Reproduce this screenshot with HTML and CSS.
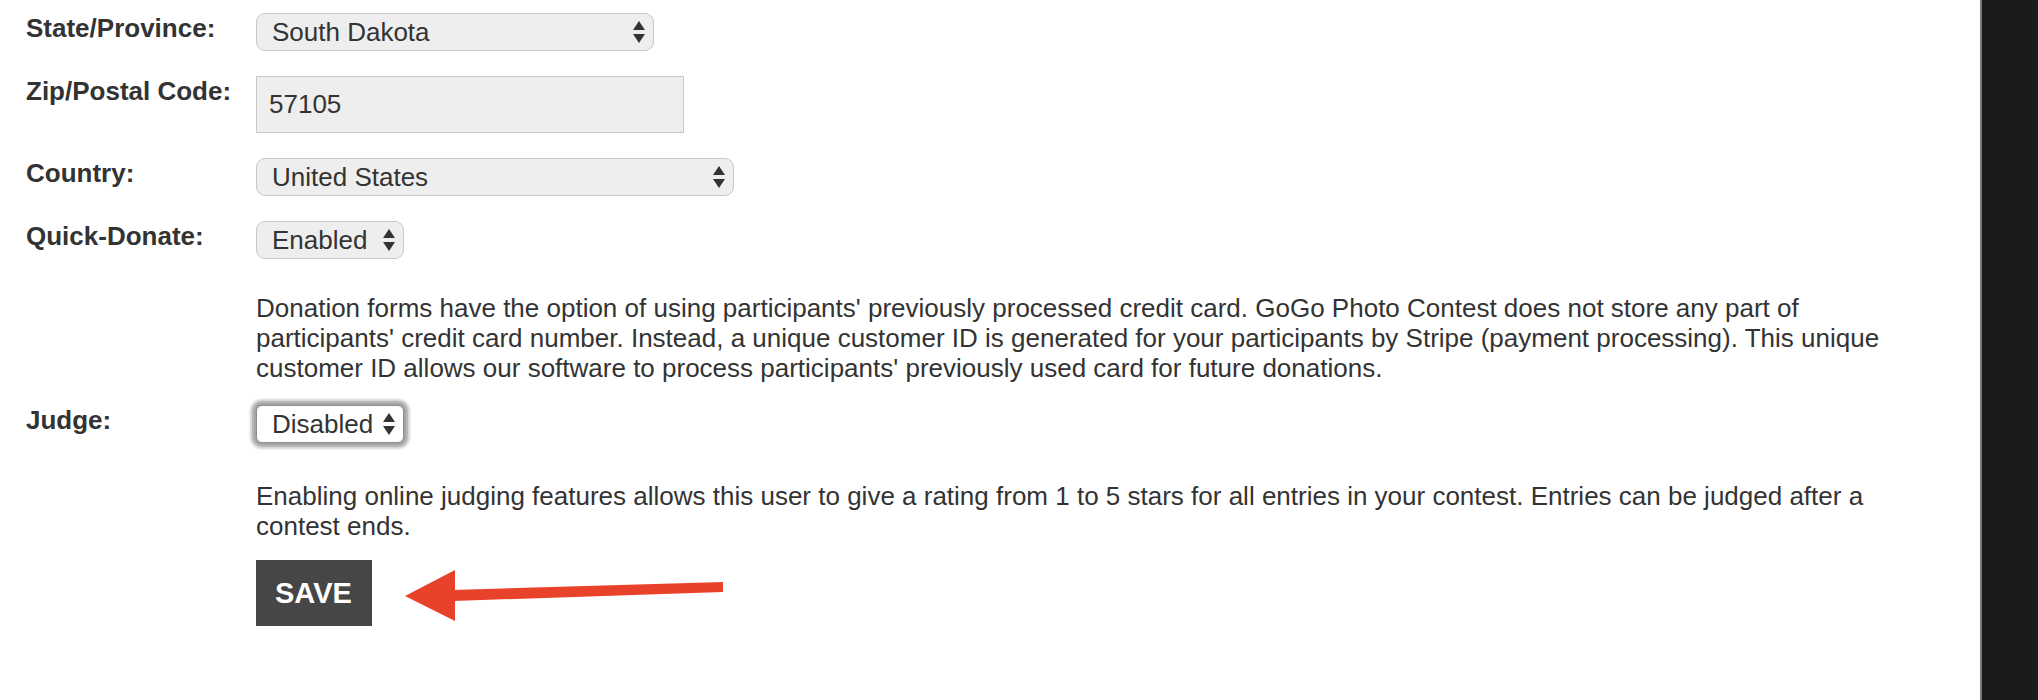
FILE: index.html
```html
<!DOCTYPE html>
<html lang="en">

<head>
  <meta charset="UTF-8">
  <meta name="viewport" content="width=device-width, initial-scale=1.0">
  <title>Account Settings</title>
  <link rel="stylesheet" href="styles.css">
</head>

<body>
  <div class="page">
    <main class="content">
      <form class="settings">
        <div class="row">
          <label class="field-label" for="state">State/Province:</label>
          <span class="select-wrap">
            <select id="state" class="select select-state">
              <option>South Dakota</option>
            </select>
            <svg class="caret" width="12" height="22" viewBox="0 0 12 22">
              <polygon points="0,9 6,0 12,9" />
              <polygon points="0,13 12,13 6,22" />
            </svg>
          </span>
        </div>

        <div class="row">
          <label class="field-label" for="zip">Zip/Postal Code:</label>
          <input type="text" id="zip" class="text-input" value="57105">
        </div>

        <div class="row">
          <label class="field-label" for="country">Country:</label>
          <span class="select-wrap">
            <select id="country" class="select select-country">
              <option>United States</option>
            </select>
            <svg class="caret" width="12" height="22" viewBox="0 0 12 22">
              <polygon points="0,9 6,0 12,9" />
              <polygon points="0,13 12,13 6,22" />
            </svg>
          </span>
        </div>

        <div class="row">
          <label class="field-label" for="quick">Quick-Donate:</label>
          <span class="select-wrap">
            <select id="quick" class="select select-small">
              <option>Enabled</option>
              <option>Disabled</option>
            </select>
            <svg class="caret" width="12" height="22" viewBox="0 0 12 22">
              <polygon points="0,9 6,0 12,9" />
              <polygon points="0,13 12,13 6,22" />
            </svg>
          </span>
        </div>

        <p class="help help-donate">Donation forms have the option of using participants' previously processed credit card. GoGo Photo Contest does not store any part of participants' credit card number. Instead, a unique customer ID is generated for your participants by Stripe (payment processing). This unique customer ID allows our software to process participants' previously used card for future donations.</p>

        <div class="row">
          <label class="field-label" for="judge">Judge:</label>
          <span class="select-wrap">
            <select id="judge" class="select select-small is-focused">
              <option>Disabled</option>
              <option>Enabled</option>
            </select>
            <svg class="caret" width="12" height="22" viewBox="0 0 12 22">
              <polygon points="0,9 6,0 12,9" />
              <polygon points="0,13 12,13 6,22" />
            </svg>
          </span>
        </div>

        <p class="help help-judge">Enabling online judging features allows this user to give a rating from 1 to 5 stars for all entries in your contest. Entries can be judged after a contest ends.</p>

        <div class="actions">
          <button type="submit" class="save">SAVE</button>
          <svg class="pointer" width="322" height="60" viewBox="0 0 322 60">
            <polygon points="50,25 320,17 320,27 50,36" />
            <polygon points="2,31 52,5 52,56" />
          </svg>
        </div>
      </form>
    </main>
    <aside class="sidebar"></aside>
  </div>
</body>

</html>
```

FILE: styles.css
```css
html,
body {
  margin: 0;
  height: 100%;
  background: #fff;
}

body {
  font-family: "Liberation Sans", Arial, Helvetica, sans-serif;
  color: #333;
  overflow: hidden;
}

.page {
  display: flex;
  height: 100%;
}

.content {
  flex: 1;
}

.sidebar {
  width: 56px;
  border-left: 2px solid #7a7a7a;
  background: #1b1b1b;
}

.settings {
  padding: 13px 0 0 26px;
}

.row {
  display: grid;
  grid-template-columns: 230px auto;
  justify-items: start;
  align-items: start;
  margin-bottom: 25px;
}

.field-label {
  padding-top: 1px;
  font-size: 26px;
  line-height: 28px;
  font-weight: bold;
  color: #333;
}

.select-wrap {
  position: relative;
  display: inline-block;
}

.select {
  -webkit-appearance: none;
  appearance: none;
  height: 38px;
  margin: 0;
  padding: 0 30px 0 15px;
  border: 1px solid #c8c8c8;
  border-radius: 9px;
  background: #eee;
  font-family: "Liberation Sans", Arial, Helvetica, sans-serif;
  font-size: 26px;
  color: #333;
  outline: none;
}

.select-state {
  width: 398px;
}

.select-country {
  width: 478px;
}

.select-small {
  width: 148px;
}

.select.is-focused {
  background: #fff;
  border: 1px solid #8c8c8c;
  border-radius: 6px;
  box-shadow: 0 0 0 2px #a4a4a4, 0 0 0 4px #b8b8b8, 0 0 2px 6px #d4d4d4;
}

.caret {
  position: absolute;
  right: 9px;
  top: 8px;
  fill: #333;
  pointer-events: none;
}

.text-input {
  box-sizing: border-box;
  width: 428px;
  height: 57px;
  margin: 0;
  padding: 0 12px;
  border: 1px solid #c8c8c8;
  background: #eee;
  font-family: "Liberation Sans", Arial, Helvetica, sans-serif;
  font-size: 26px;
  color: #333;
}

.help {
  margin: 0 0 0 230px;
  max-width: 1670px;
  font-size: 26px;
  line-height: 30px;
  color: #333;
}

.help-donate {
  margin-top: 34px;
  margin-bottom: 22px;
}

.help-judge {
  margin-top: 38px;
  margin-bottom: 19px;
}

.actions {
  display: flex;
  align-items: center;
  margin-left: 230px;
}

.save {
  height: 66px;
  padding: 0 20px 0 19px;
  border: none;
  border-radius: 0;
  background: #464646;
  color: #fff;
  font-family: "Liberation Sans", Arial, Helvetica, sans-serif;
  font-size: 29px;
  font-weight: bold;
  cursor: pointer;
}

.pointer {
  margin-left: 31px;
  margin-top: 4px;
  fill: #e8432a;
}
```
